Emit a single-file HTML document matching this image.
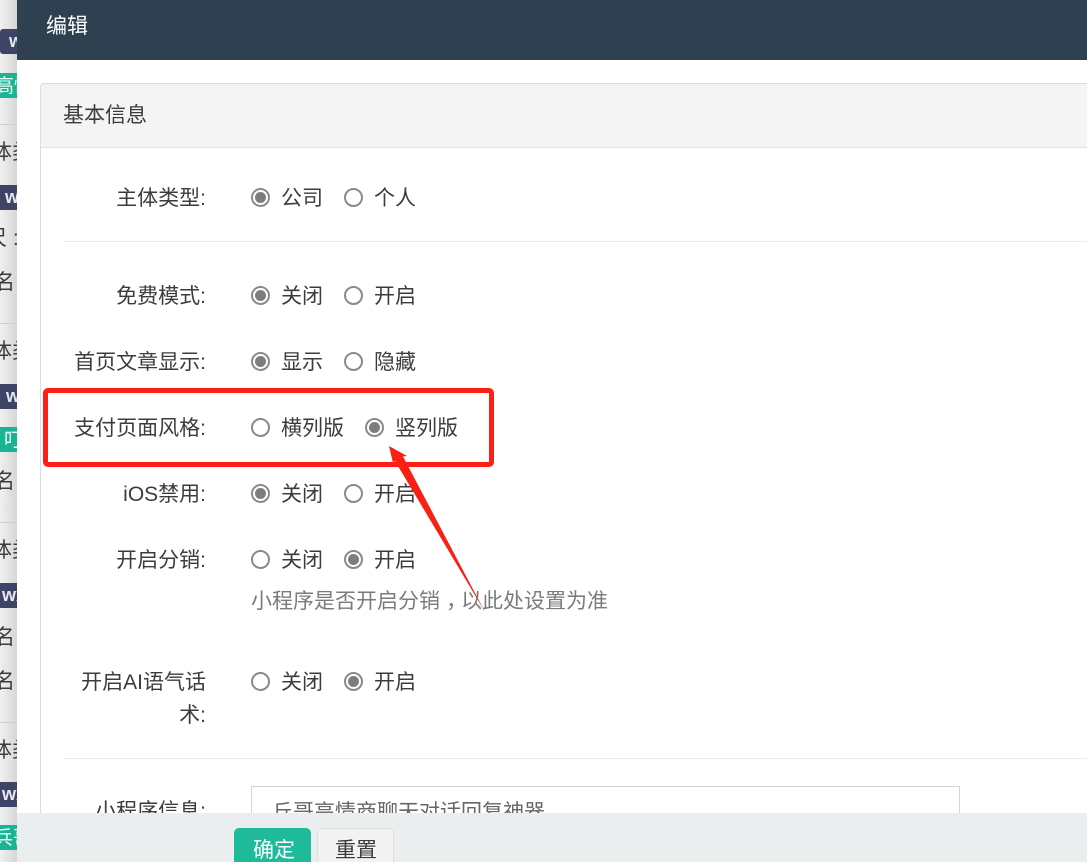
<!DOCTYPE html>
<html lang="zh"><head><meta charset="utf-8"><title>编辑</title>
<style>
html,body{margin:0;padding:0;background:#fff}
#p{position:relative;width:1087px;height:862px;overflow:hidden;background:#fff;font-family:"Liberation Sans","Noto Sans CJK SC",sans-serif;font-size:21px;color:#3c3c3c}
#p div{position:absolute;white-space:nowrap}
.t{line-height:32px;height:32px}
.l{line-height:32px;height:32px;text-align:right;width:206px;left:0}
.r{width:19px;height:19px;box-sizing:border-box;border:2px solid #8a8a8a;border-radius:50%;background:#fff}
.r.c::after{content:"";position:absolute;left:2px;top:2px;width:11px;height:11px;border-radius:50%;background:#7d7d7d}
.clip{left:0;width:17px;height:32px;overflow:hidden;line-height:32px}
.clip span{position:absolute;top:0;white-space:nowrap}
.w,.g{left:0;width:17px;height:25px;overflow:hidden;line-height:25px}
.w{background:#3d4465;color:#e8e8f0;font-weight:bold;font-size:18px}
.g{background:#1ab394;color:#e8fff8;font-size:19px}
.w span,.g span{position:absolute;top:0;white-space:nowrap}
</style></head><body><div id="p">
<div style="left:0;top:0;width:17px;height:862px;background:linear-gradient(90deg,#f0f0f0,#d6d6d6)"></div>
<div class="w" style="top:29px;border-radius:3px 0 0 3px"><span style="left:9px">w</span></div>
<div class="g" style="top:73px"><span style="left:-5px;top:1px">高情</span></div>
<div style="left:0;top:124px;width:17px;height:1px;background:#cfcfcf"></div>
<div class="clip" style="top:137px"><span style="left:-9px">体类</span></div>
<div class="w" style="top:185px"><span style="left:5px">w</span></div>
<div class="clip" style="top:223px"><span style="left:-14px">尺 :</span></div>
<div class="clip" style="top:267px"><span style="left:-6px">名</span></div>
<div style="left:0;top:323px;width:17px;height:1px;background:#cfcfcf"></div>
<div class="clip" style="top:336px"><span style="left:-9px">体类</span></div>
<div class="w" style="top:384px"><span style="left:6px">w</span></div>
<div class="g" style="top:427px"><span style="left:4px;top:1px">叮</span></div>
<div class="clip" style="top:466px"><span style="left:-6px">名</span></div>
<div style="left:0;top:522px;width:17px;height:1px;background:#cfcfcf"></div>
<div class="clip" style="top:535px"><span style="left:-9px">体类</span></div>
<div class="w" style="top:583px"><span style="left:2px">wx</span></div>
<div class="clip" style="top:622px"><span style="left:-6px">名</span></div>
<div class="clip" style="top:666px"><span style="left:-6px">名</span></div>
<div style="left:0;top:722px;width:17px;height:1px;background:#cfcfcf"></div>
<div class="clip" style="top:735px"><span style="left:-9px">体类</span></div>
<div class="w" style="top:782px"><span style="left:2px">wx</span></div>
<div class="g" style="top:825px"><span style="left:-6px;top:1px">兵哥</span></div>

<div style="left:17px;top:0;width:1070px;height:60px;background:#2f4050"></div>
<div class="t" style="left:46px;top:11px;color:#fff">编辑</div>

<div style="left:40px;top:83px;width:1060px;height:800px;border:1px solid #dcdcdc;border-radius:4px;box-sizing:border-box"></div>
<div style="left:41px;top:84px;width:1046px;height:63px;background:#f4f4f4;border-bottom:1px solid #e2e2e2;border-radius:3px 0 0 0"></div>
<div class="t" style="left:63px;top:100px">基本信息</div>

<div class="l" style="top:183px">主体类型:</div>
<div class="r c" style="left:251px;top:188px"></div><div class="t" style="left:281px;top:183px">公司</div>
<div class="r" style="left:344px;top:188px"></div><div class="t" style="left:374px;top:183px">个人</div>
<div style="left:63px;top:241px;width:1024px;height:1px;background:#ececec"></div>

<div class="l" style="top:281px">免费模式:</div>
<div class="r c" style="left:251px;top:286px"></div><div class="t" style="left:281px;top:281px">关闭</div>
<div class="r" style="left:344px;top:286px"></div><div class="t" style="left:374px;top:281px">开启</div>

<div class="l" style="top:347px">首页文章显示:</div>
<div class="r c" style="left:251px;top:352px"></div><div class="t" style="left:281px;top:347px">显示</div>
<div class="r" style="left:344px;top:352px"></div><div class="t" style="left:374px;top:347px">隐藏</div>

<div class="l" style="top:413px">支付页面风格:</div>
<div class="r" style="left:251px;top:418px"></div><div class="t" style="left:281px;top:413px">横列版</div>
<div class="r c" style="left:365px;top:418px"></div><div class="t" style="left:395px;top:413px">竖列版</div>

<div class="l" style="top:479px">iOS禁用:</div>
<div class="r c" style="left:251px;top:484px"></div><div class="t" style="left:281px;top:479px">关闭</div>
<div class="r" style="left:344px;top:484px"></div><div class="t" style="left:374px;top:479px">开启</div>

<div class="l" style="top:545px">开启分销:</div>
<div class="r" style="left:251px;top:550px"></div><div class="t" style="left:281px;top:545px">关闭</div>
<div class="r c" style="left:344px;top:550px"></div><div class="t" style="left:374px;top:545px">开启</div>
<div class="t" style="left:251px;top:586px;color:#7b7b7b">小程序是否开启分销<span style="position:relative;left:6px">，</span>以此处设置为准</div>

<div class="l" style="top:667px">开启AI语气话</div>
<div class="l" style="top:700px">术:</div>
<div class="r" style="left:251px;top:672px"></div><div class="t" style="left:281px;top:667px">关闭</div>
<div class="r c" style="left:344px;top:672px"></div><div class="t" style="left:374px;top:667px">开启</div>
<div style="left:63px;top:758px;width:1024px;height:1px;background:#ececec"></div>

<div class="l" style="top:796px">小程序信息:</div>
<div style="left:251px;top:786px;width:709px;height:60px;border:1px solid #cfd5dd;box-sizing:border-box"></div>
<div class="t" style="left:272px;top:797px;color:#666">丘哥高情商聊天对话回复神器</div>

<div style="left:43px;top:388px;width:451px;height:79px;box-sizing:border-box;border:5px solid #fb2014;border-radius:5px"></div>
<svg style="position:absolute;left:0;top:0" width="1087" height="862" viewBox="0 0 1087 862"><path d="M389 446 L407 456 L403 456.500 L485 612 L395 461 L393 463 Z" fill="#fb2014"/></svg>

<div style="left:17px;top:813px;width:1070px;height:49px;background:#ebeeef"></div>
<div style="left:234px;top:828px;width:77px;height:50px;background:#1ebb9b;border-radius:5px"></div>
<div class="t" style="left:253px;top:835px;color:#fff">确定</div>
<div style="left:317px;top:828px;width:77px;height:50px;background:#f3f3f3;border:1px solid #dedede;box-sizing:border-box;border-radius:5px"></div>
<div class="t" style="left:335px;top:835px">重置</div>
</div></body></html>
